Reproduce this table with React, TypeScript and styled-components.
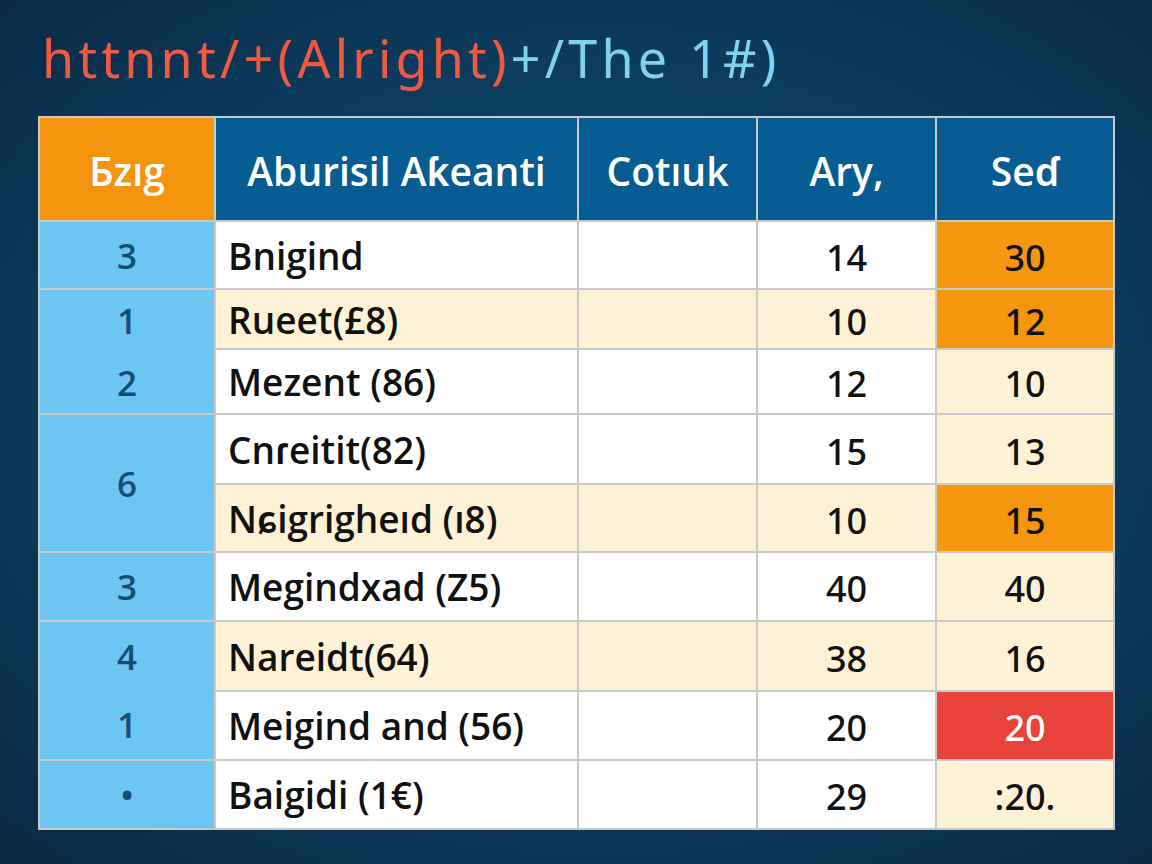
import React from 'react'
import styled, { createGlobalStyle } from 'styled-components'

const GlobalStyle = createGlobalStyle`
    html, body {
        margin: 0;
        padding: 0;
    }
    body {
        width: 1152px;
        height: 864px;
        overflow: hidden;
        font-family: 'Noto Sans', 'Open Sans', sans-serif;
    }
`

type Tone = 'white' | 'cream' | 'orange' | 'red'

const tones: Record<Tone, string> = {
    white: '#ffffff',
    cream: '#fdf2d6',
    orange: '#f5960f',
    red: '#e8433a',
}

type Row = {
    name: string
    ary: string
    sed: string
    tone: Tone
    sedTone: Tone
}

const rows: Row[] = [
    { name: 'Bnigind', ary: '14', sed: '30', tone: 'white', sedTone: 'orange' },
    { name: 'Rueet(£8)', ary: '10', sed: '12', tone: 'cream', sedTone: 'orange' },
    { name: 'Mezent (86)', ary: '12', sed: '10', tone: 'white', sedTone: 'cream' },
    { name: 'Cnɾeitit(82)', ary: '15', sed: '13', tone: 'white', sedTone: 'cream' },
    { name: 'Nɕigrigheıd (ı8)', ary: '10', sed: '15', tone: 'cream', sedTone: 'orange' },
    { name: 'Megindxad (Z5)', ary: '40', sed: '40', tone: 'white', sedTone: 'cream' },
    { name: 'Nareidt(64)', ary: '38', sed: '16', tone: 'cream', sedTone: 'cream' },
    { name: 'Meigind and (56)', ary: '20', sed: '20', tone: 'white', sedTone: 'red' },
    { name: 'Baigidi (1€)', ary: '29', sed: ':20.', tone: 'white', sedTone: 'cream' },
]

// first column merges some rows: [label(s), start row, span]
const ranks: { labels: string[]; start: number; span: number }[] = [
    { labels: ['3'], start: 2, span: 1 },
    { labels: ['1', '2'], start: 3, span: 2 },
    { labels: ['6'], start: 5, span: 2 },
    { labels: ['3'], start: 7, span: 1 },
    { labels: ['4', '1'], start: 8, span: 2 },
    { labels: ['•'], start: 10, span: 1 },
]

export default function App() {
    return (
        <Page>
            <GlobalStyle />
            <Title>
                <Red>httnnt/+(Alright)</Red>
                <Blue>+/The 1#)</Blue>
            </Title>
            <Grid>
                <HeadCell $accent>Бzıg</HeadCell>
                <HeadCell>Aburisil Aƙeanti</HeadCell>
                <HeadCell>Cotıuk</HeadCell>
                <HeadCell>Ary,</HeadCell>
                <HeadCell>Seɗ</HeadCell>
                {ranks.map((r) => (
                    <RankCell
                        key={r.start}
                        style={{ gridRow: `${r.start} / span ${r.span}` }}
                    >
                        {r.labels.map((l, i) => (
                            <RankLabel key={i}>{l}</RankLabel>
                        ))}
                    </RankCell>
                ))}
                {rows.map((r, i) => (
                    <React.Fragment key={r.name}>
                        <NameCell $tone={r.tone} style={{ gridRow: i + 2 }}>
                            {r.name}
                        </NameCell>
                        <Cell $tone={r.tone} style={{ gridRow: i + 2 }} />
                        <Cell $tone={r.tone} style={{ gridRow: i + 2 }}>
                            {r.ary}
                        </Cell>
                        <Cell
                            $tone={r.sedTone}
                            $light={r.sedTone === 'red'}
                            style={{ gridRow: i + 2 }}
                        >
                            {r.sed}
                        </Cell>
                    </React.Fragment>
                ))}
            </Grid>
        </Page>
    )
}

const Page = styled.div`
    width: 1152px;
    height: 864px;
    box-sizing: border-box;
    padding: 26px 0 0 38px;
    background: radial-gradient(
        ellipse 75% 70% at 52% 48%,
        #11557f 0%,
        #0c3f63 50%,
        #092a45 100%
    );
`

const Title = styled.h1`
    margin: 0 0 0 4px;
    height: 90px;
    font-family: 'Noto Sans', sans-serif;
    font-weight: 400;
    font-size: 52px;
    line-height: 64px;
    letter-spacing: 4.2px;
    white-space: nowrap;
`

const Red = styled.span`
    color: #f15a41;
`

const Blue = styled.span`
    color: #80d2f3;
`

const Grid = styled.div`
    display: inline-grid;
    grid-template-columns: 174px 361px 177px 177px 176px;
    grid-template-rows: 102px 66px 58px 63px 68px 66px 67px 68px 67px 67px;
    gap: 2px;
    padding: 2px;
    background: #c9c9c6;
`

const HeadCell = styled.div<{ $accent?: boolean }>`
    display: flex;
    align-items: center;
    justify-content: center;
    background: ${(p) => (p.$accent ? '#f5950f' : '#075d92')};
    color: #fff;
    font-family: 'Open Sans', 'Noto Sans', sans-serif;
    font-weight: 600;
    font-size: 39px;
    padding-top: 2px;
`

const RankCell = styled.div`
    grid-column: 1;
    display: flex;
    flex-direction: column;
    background: #6cc6f1;
`

const RankLabel = styled.div`
    flex: 1;
    display: flex;
    align-items: center;
    justify-content: center;
    color: #174c72;
    font-family: 'Open Sans', 'Noto Sans', sans-serif;
    font-weight: 600;
    font-size: 35px;
`

const Cell = styled.div<{ $tone: Tone; $light?: boolean }>`
    display: flex;
    align-items: center;
    justify-content: center;
    background: ${(p) => tones[p.$tone]};
    color: ${(p) => (p.$light ? '#fff' : '#111')};
    font-family: 'Noto Sans', 'Open Sans', sans-serif;
    font-weight: 500;
    font-size: 36px;
    padding-top: 4px;
`

const NameCell = styled(Cell)`
    grid-column: 2;
    justify-content: flex-start;
    padding-left: 12px;
    font-family: 'Open Sans', 'Noto Sans', sans-serif;
    font-weight: 600;
    font-size: 37px;
    padding-top: 0;
`
